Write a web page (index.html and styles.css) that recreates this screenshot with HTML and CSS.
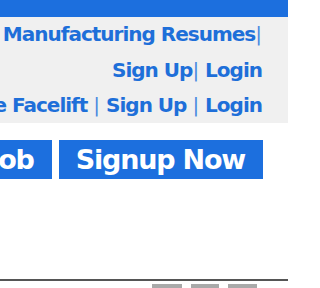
FILE: index.html
```html
<!DOCTYPE html>
<html>
<head>
<meta charset="utf-8">
<link rel="stylesheet" href="styles.css">
</head>
<body>
<div class="page">
  <div class="topbar"></div>
  <div class="nav">
    <div class="navline"><a>Post Jobs | Search Manufacturing Resumes</a><span class="sep">|</span></div>
    <div class="navline"><a>Sign Up</a><span class="sep">|</span>&nbsp;<a>Login</a></div>
    <div class="navline"><a>Resume Facelift</a>&nbsp;<span class="sep">|</span>&nbsp;<a>Sign Up</a>&nbsp;<span class="sep">|</span>&nbsp;<a>Login</a></div>
  </div>
  <div class="actions">
    <a class="btn">Post a Job</a>
    <a class="btn">Signup Now</a>
  </div>
  <div class="spacer"></div>
  <div class="footer">
    <div class="tabs">
      <span class="tab t1"></span>
      <span class="tab t2"></span>
      <span class="tab t3"></span>
    </div>
  </div>
</div>
</body>
</html>
```
FILE: styles.css
```css
html, body {
  margin: 0;
  padding: 0;
  background: #ffffff;
  overflow: hidden;
}
.page {
  width: 288px;
  height: 288px;
  overflow: hidden;
  font-family: "DejaVu Sans", "Liberation Sans", sans-serif;
  font-weight: bold;
}
.topbar {
  height: 17px;
  background: #1c6fde;
}
.nav {
  background: #f0f0f0;
  height: 106px;
  padding-right: 26px;
  box-sizing: border-box;
}
.navline {
  display: flex;
  justify-content: flex-end;
  white-space: nowrap;
  font-size: 20px;
  letter-spacing: -1px;
  line-height: 35.5px;
  color: #1e6fd9;
}
.sep {
  font-weight: normal;
  color: #4a8be0;
  letter-spacing: 0;
}
.actions {
  display: flex;
  justify-content: flex-end;
  gap: 7px;
  padding-right: 25px;
  margin-top: 17px;
  white-space: nowrap;
}
.btn {
  display: block;
  background: #1c6fde;
  color: #ffffff;
  font-size: 27px;
  letter-spacing: -1.2px;
  line-height: 39px;
  height: 39px;
  padding: 0 18px 0 17px;
}
.spacer {
  height: 100px;
}
.footer {
  border-top: 2px solid #555555;
  padding-top: 3px;
}
.tabs {
  display: flex;
  justify-content: flex-end;
  gap: 9px;
  padding-right: 31px;
}
.tab {
  display: block;
  height: 6px;
  background: #a9a9a9;
}
.t1 { width: 30px; }
.t2 { width: 28px; }
.t3 { width: 29px; }
```
